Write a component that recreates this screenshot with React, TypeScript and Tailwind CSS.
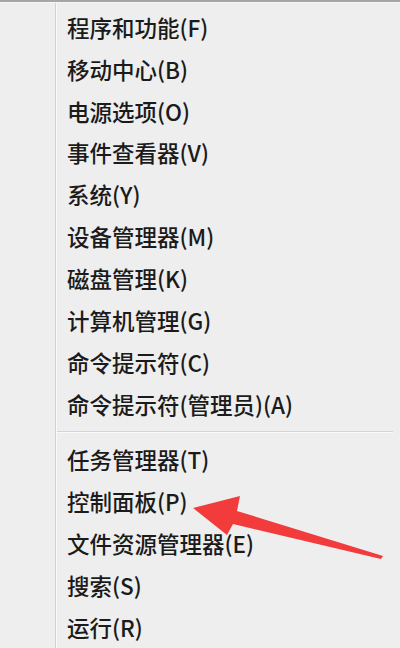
import React from "react";

const group1 = [
  "程序和功能(F)",
  "移动中心(B)",
  "电源选项(O)",
  "事件查看器(V)",
  "系统(Y)",
  "设备管理器(M)",
  "磁盘管理(K)",
  "计算机管理(G)",
  "命令提示符(C)",
  "命令提示符(管理员)(A)",
];
const group2 = ["任务管理器(T)", "控制面板(P)", "文件资源管理器(E)", "搜索(S)", "运行(R)"];

function Item({ label }: { label: string }) {
  return (
    <div className="h-[42.33px] flex items-center pl-[10px] text-[22.5px] font-medium leading-none text-[#1b1b1b] whitespace-nowrap">
      {label}
    </div>
  );
}

export default function App() {
  return (
    <div
      className="relative w-[400px] h-[648px] overflow-hidden bg-[#eeeeee]"
      style={{ fontFamily: '"Noto Sans CJK SC", "Noto Sans", sans-serif' }}
    >
      <div className="h-[2px] bg-[#a6a6a6]" />
      <div className="h-[1px] bg-[#f6f6f6]" />
      <div className="flex h-[645px]">
        <div className="w-[55px] shrink-0" />
        <div className="w-[1px] bg-[#d2d2d2] shrink-0" />
        <div className="w-[1px] bg-[#fafafa] shrink-0" />
        <div className="flex-1 flex flex-col pt-[3px]">
          {group1.map((l) => (
            <Item key={l} label={l} />
          ))}
          <div className="h-[13.6px] flex flex-col justify-center pr-[7px]">
            <div className="h-[1px] bg-[#d4d4d4]" />
            <div className="h-[1px] bg-[#fafafa]" />
          </div>
          {group2.map((l) => (
            <Item key={l} label={l} />
          ))}
        </div>
      </div>
      <svg className="absolute left-0 top-0" width="400" height="648" viewBox="0 0 400 648">
        <polygon
          points="193,508 240,496 237,511 383,556 381,559 233,524 227,535"
          fill="#f23b3b"
        />
      </svg>
    </div>
  );
}
